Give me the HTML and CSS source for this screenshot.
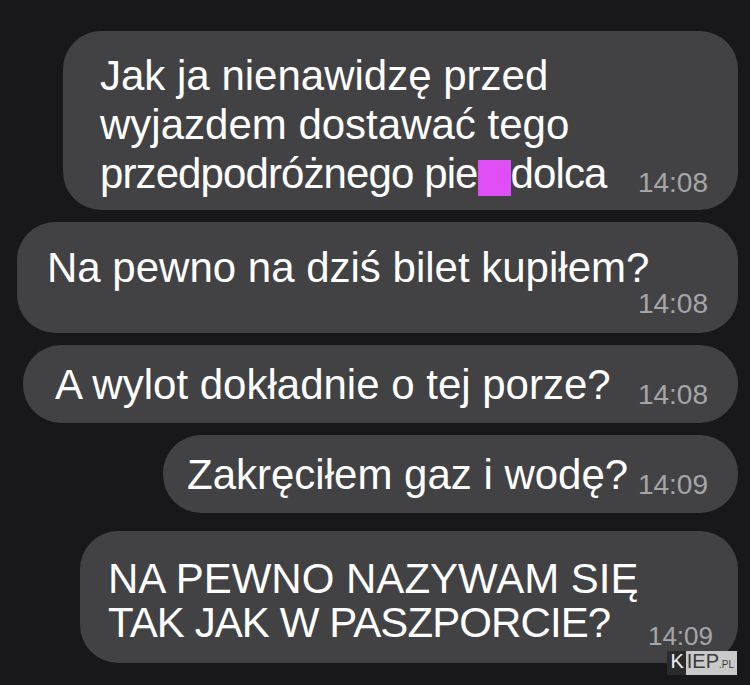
FILE: index.html
```html
<!DOCTYPE html>
<html lang="pl">
<head>
    <meta charset="UTF-8">
    <meta name="viewport" content="width=device-width, initial-scale=1.0">
    <title>Wiadomości</title>
    <link rel="stylesheet" href="styles.css">
</head>
<body>
    <div class="chat">
        <div class="bubble b1">
            <span class="text">Jak ja nienawidzę przed<br>wyjazdem dostawać tego<br><span class="tight">przedpodróżnego pie<span class="censor"></span>dolca</span></span>
            <span class="time">14:08</span>
        </div>
        <div class="bubble b2">
            <span class="text">Na pewno na dziś bilet kupiłem?</span>
            <span class="time">14:08</span>
        </div>
        <div class="bubble b3">
            <span class="text">A wylot dokładnie o tej porze?</span>
            <span class="time">14:08</span>
        </div>
        <div class="bubble b4">
            <span class="text">Zakręciłem gaz i wodę?</span>
            <span class="time">14:09</span>
        </div>
        <div class="bubble b5">
            <span class="text">NA PEWNO NAZYWAM SIĘ<br><span class="tight">TAK JAK W PASZPORCIE?</span></span>
            <span class="time">14:09</span>
        </div>
    </div>

    <div class="watermark"><span class="wm-k">K</span><span class="wm-rest">IEP<small>.PL</small></span></div>
</body>
</html>
```

FILE: styles.css
```css
/* Page */
body {
    margin: 0;
    padding: 0;
    background-color: #18171a;
    font-family: 'Liberation Sans', Arial, sans-serif;
    width: 750px;
    height: 685px;
    overflow: hidden;
    position: relative;
}

/* Message list */
.chat {
    display: flex;
    flex-direction: column;
    align-items: flex-end;
    padding: 31px 12px 0 0;
}

.bubble {
    background-color: #424244;
    color: #ffffff;
    border-radius: 38px;
    font-size: 42px;
    line-height: 49px;
    box-sizing: border-box;
    display: flex;
    align-items: flex-end;
    justify-content: space-between;
}

.tight {
    letter-spacing: -0.9px;
}

.time {
    color: #a6a6a8;
    font-size: 28px;
    line-height: 28px;
}

.censor {
    display: inline-block;
    width: 33px;
    height: 36px;
    background-color: #df4ff5;
    vertical-align: -8px;
}

/* Individual bubbles */
.b1 {
    width: 675px;
    height: 179px;
    padding: 0 30px 0 37px;
}

.b1 .text {
    margin-bottom: 12px;
}

.b1 .time {
    margin-bottom: 13px;
}

.b2 {
    width: 721px;
    height: 111px;
    margin-top: 12px;
    padding: 21px 30px 0 30px;
    flex-direction: column;
    align-items: flex-start;
    justify-content: flex-start;
}

.b2 .time {
    align-self: flex-end;
    margin-top: -2px;
}

.b3,
.b4 {
    height: 78px;
    margin-top: 12px;
    padding-right: 30px;
}

.b3 {
    width: 715px;
    padding-left: 32px;
}

.b4 {
    width: 575px;
    padding-left: 24px;
}

.b3 .text,
.b4 .text,
.b3 .time,
.b4 .time {
    margin-bottom: 14px;
}

.b5 {
    width: 658px;
    height: 132px;
    margin-top: 18px;
    padding: 0 25px 0 28px;
    line-height: 44px;
}

.b5 .text {
    margin-bottom: 18px;
}

.b5 .time {
    font-size: 26px;
    line-height: 24px;
    margin-bottom: 15px;
}

/* Watermark */
.watermark {
    position: absolute;
    right: 13px;
    bottom: 10px;
    display: flex;
    font-size: 20px;
    line-height: 21px;
}

.wm-k {
    background-color: #2b2b2b;
    color: #f0f0f0;
    padding: 0 2px 0 3px;
}

.wm-rest {
    background-color: #c9c9c9;
    color: #3a3a3a;
    padding: 0 3px 0 1px;
}

.wm-rest small {
    font-size: 10px;
}
```
